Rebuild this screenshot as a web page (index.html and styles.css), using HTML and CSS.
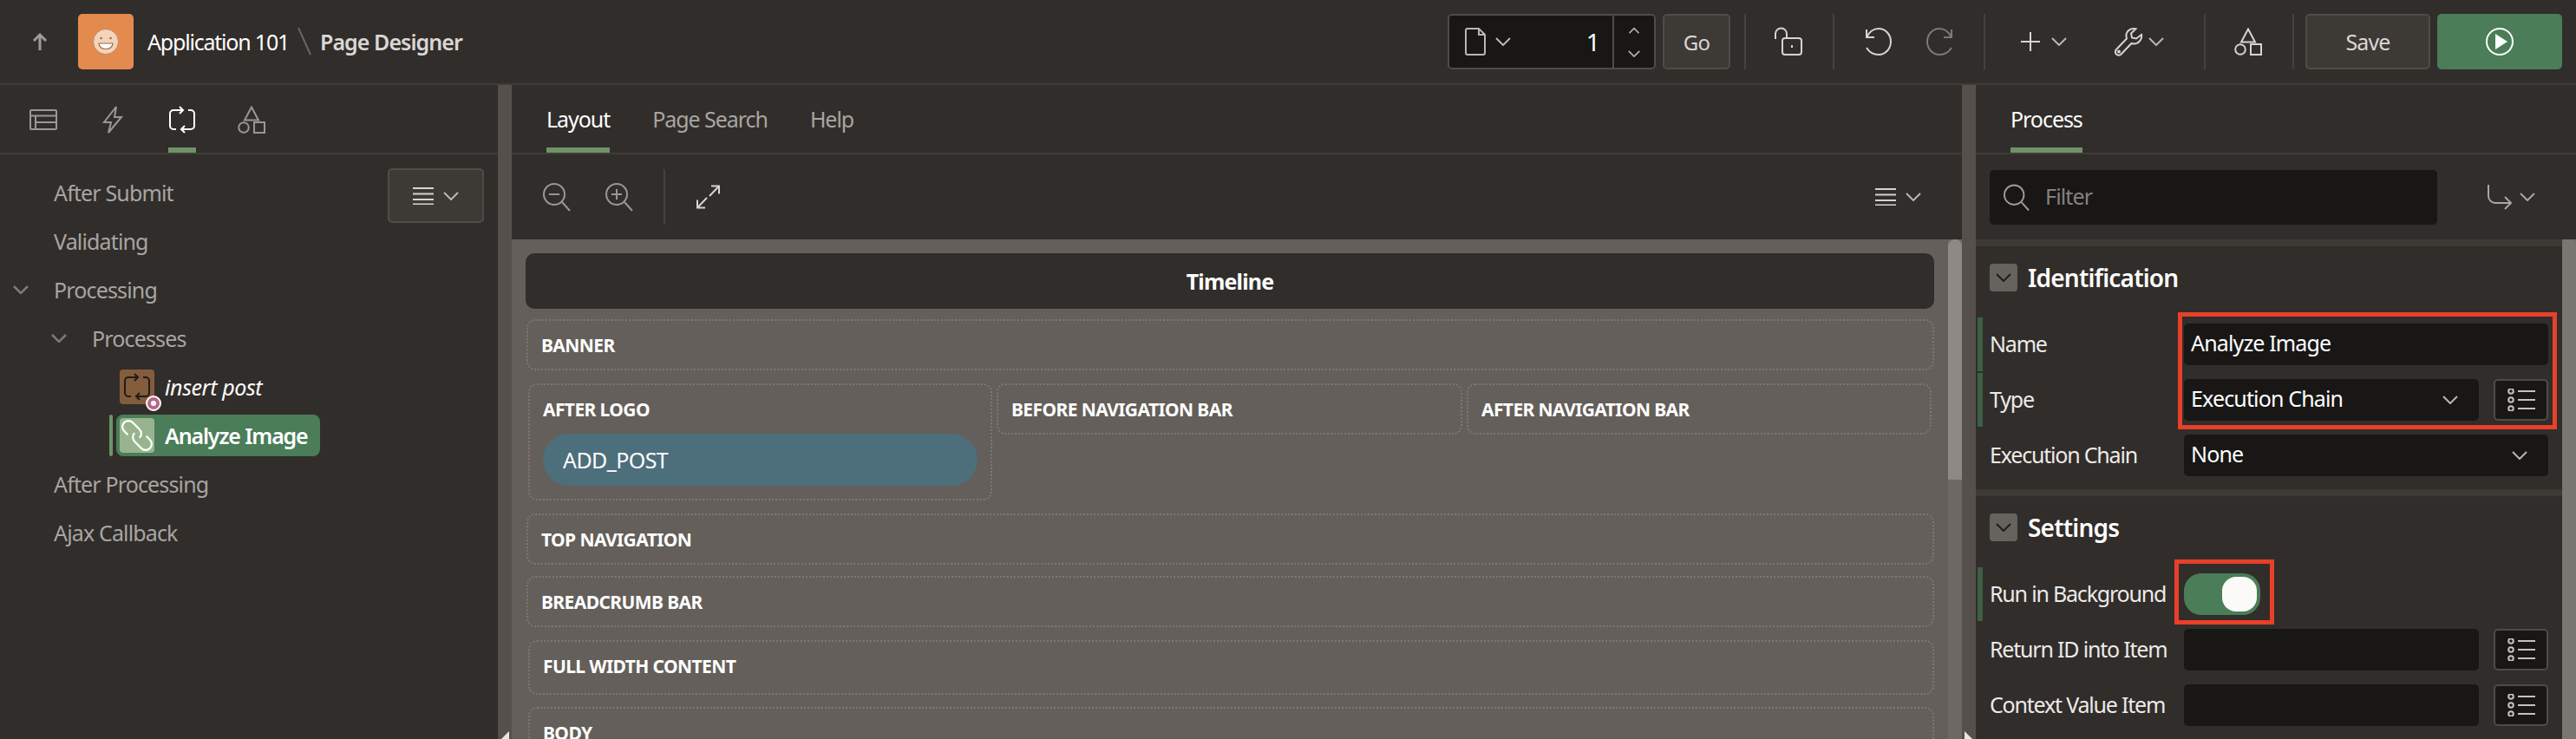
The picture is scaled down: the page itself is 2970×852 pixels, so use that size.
FILE: index.html
```html
<!DOCTYPE html>
<html lang="en">
<head>
<meta charset="utf-8">
<title>Page Designer</title>
<link rel="stylesheet" href="styles.css">
</head>
<body>
<svg class="sprite" xmlns="http://www.w3.org/2000/svg">
  <symbol id="i-chev" viewBox="0 0 18 10"><path d="M1 1l8 8 8-8"/></symbol>
  <symbol id="i-shapes" viewBox="0 0 32 32"><path d="M16 1.500L24 16.500H8Z"/><circle cx="7" cy="25" r="5.800"/><rect x="19" y="19" width="12" height="12"/></symbol>
  <symbol id="i-loop" viewBox="0 0 32 32"><path d="M17 5H6a4 4 0 0 0-4 4v14a4 4 0 0 0 4 4h3M15 27h11a4 4 0 0 0 4-4V9a4 4 0 0 0-4-4h-3M13 1l4 4-4 4M19 23l-4 4 4 4"/></symbol>
  <symbol id="i-menu" viewBox="0 0 24 20"><path d="M0 1h24M0 7.500h24M0 14h24M0 19.500h24"/></symbol>
  <symbol id="i-list" viewBox="0 0 32 26"><circle cx="4" cy="3" r="2.800"/><circle cx="4" cy="13" r="2.800"/><circle cx="4" cy="23" r="2.800"/><path d="M12 3h20M12 13h20M12 23h20"/></symbol>
</svg>

<header class="topbar">
  <svg class="ico ic-up" viewBox="0 0 18 20"><path d="M9 20V2M2 9l7-7 7 7"/></svg>
  <div class="app-logo">
    <svg class="logo-face" viewBox="0 0 30 30"><circle class="face" cx="15" cy="15" r="14.500"/><circle class="eye" cx="9.500" cy="11" r="1.300"/><circle class="eye" cx="20.500" cy="11" r="1.300"/><path class="mouth" d="M7 17h16c0 4-3.500 6.500-8 6.500S7 21 7 17Z"/></svg>
  </div>
  <span class="crumb-app">Application 101</span>
  <svg class="crumb-slash" viewBox="0 0 16 32"><path d="M1 0l14 31"/></svg>
  <span class="crumb-page">Page Designer</span>

  <div class="page-picker">
    <svg class="ico ic-page" viewBox="0 0 24 32"><path d="M1 3a2 2 0 0 1 2-2h13l7 7v21a2 2 0 0 1-2 2H3a2 2 0 0 1-2-2ZM16 1v7h7"/></svg>
    <svg class="ico ic-chev ic-chev-page"><use href="#i-chev"/></svg>
    <span class="page-num">1</span>
    <div class="spinner">
      <svg class="ico ic-spin" viewBox="0 0 18 10"><path d="M2 9l7-7 7 7"/></svg>
      <svg class="ico ic-spin"><use href="#i-chev"/></svg>
    </div>
  </div>
  <button class="btn btn-go">Go</button>
  <span class="sep sep-a"></span>
  <svg class="ico ic-tb ic-lock" viewBox="0 0 32 32"><path d="M1 13V7a6.500 6.500 0 0 1 13 0v5"/><rect x="9" y="12" width="22" height="19" rx="3"/><path d="M20 20v3"/></svg>
  <span class="sep sep-b"></span>
  <svg class="ico ic-tb ic-undo" viewBox="0 0 32 32"><path d="M2 2v9h9M2 11C5 5 10 1 16 1c8 0 14 7 14 15s-6 15-14 15c-6 0-11-3-14-8"/></svg>
  <svg class="ico ic-tb ic-redo" viewBox="0 0 32 32"><path d="M30 2v9h-9M30 11C27 5 22 1 16 1 8 1 2 8 2 16s6 15 14 15c6 0 11-3 14-8"/></svg>
  <span class="sep sep-c"></span>
  <svg class="ico ic-plus" viewBox="0 0 22 22"><path d="M11 0v22M0 11h22"/></svg>
  <svg class="ico ic-chev ic-chev-plus"><use href="#i-chev"/></svg>
  <svg class="ico ic-tb ic-wrench" viewBox="0 0 32 32"><path d="M31 8c1 5-3 10.500-8.500 10.500-1 0-2-.2-3-.5L7.500 30.500c-1.500 1.500-4 1.500-5.500 0s-1.500-4 0-5.500L14 12.500c-1-3-.5-6.500 1.500-8.800C18 1 21.500.5 24.500 1.300L19 6.500l1 5 5 1Z"/><circle cx="5" cy="27.500" r="1"/></svg>
  <svg class="ico ic-chev ic-chev-wrench"><use href="#i-chev"/></svg>
  <span class="sep sep-d"></span>
  <svg class="ico ic-tb ic-shapes-top"><use href="#i-shapes"/></svg>
  <span class="sep sep-e"></span>
  <button class="btn btn-save">Save</button>
  <button class="btn btn-run" aria-label="Run">
    <svg class="ic-run" viewBox="0 0 32 32"><circle cx="16" cy="16" r="15"/><path d="M11 7l14 9-14 9Z"/></svg>
  </button>
</header>

<main class="workspace">
  <section class="left-pane">
    <nav class="tabs icon-tabs">
      <span class="icon-tab"><svg class="ico ic-tab ic-tab-wide" viewBox="0 0 32 24"><rect x="1" y="1" width="30" height="22" rx="1"/><path d="M1 7.500h30M7 7.500V23M7 15h24"/></svg></span>
      <span class="icon-tab"><svg class="ico ic-tab" viewBox="0 0 24 32"><path d="M16 1L2 19h8L7 31l15-18h-8Z"/></svg></span>
      <span class="icon-tab active"><svg class="ico ic-tab"><use href="#i-loop"/></svg></span>
      <span class="icon-tab"><svg class="ico ic-tab"><use href="#i-shapes"/></svg></span>
    </nav>
    <div class="tree-wrap">
      <ul class="tree">
        <li class="tree-row lvl0"><span class="twist"></span>After Submit</li>
        <li class="tree-row lvl0"><span class="twist"></span>Validating</li>
        <li class="tree-row lvl0"><span class="twist"><svg class="ico ic-chev"><use href="#i-chev"/></svg></span>Processing</li>
        <li class="tree-row lvl1"><span class="twist"><svg class="ico ic-chev"><use href="#i-chev"/></svg></span>Processes</li>
        <li class="tree-row lvl2">
          <span class="node">
            <span class="node-icon node-icon-brown">
              <svg class="ic-node-loop"><use href="#i-loop"/></svg>
              <span class="badge"></span>
            </span>
            <em class="node-label node-label-italic">insert post</em>
          </span>
        </li>
        <li class="tree-row lvl2 selected">
          <span class="node">
            <span class="node-icon node-icon-green">
              <svg class="ic-link" viewBox="0 0 40 40"><g transform="rotate(45 20 20)"><path d="M24 20a7 7 0 0 0-7-7H6a7 7 0 0 0 0 14h6M16 20a7 7 0 0 0 7 7h11a7 7 0 0 0 0-14h-6"/></g></svg>
            </span>
            <span class="node-label">Analyze Image</span>
          </span>
        </li>
        <li class="tree-row lvl0"><span class="twist"></span>After Processing</li>
        <li class="tree-row lvl0"><span class="twist"></span>Ajax Callback</li>
      </ul>
      <button class="btn btn-treemenu" aria-label="Menu">
        <svg class="ico ic-menu"><use href="#i-menu"/></svg>
        <svg class="ico ic-chev"><use href="#i-chev"/></svg>
      </button>
    </div>
  </section>

  <div class="splitter"><span class="collapse collapse-left"></span></div>

  <section class="center-pane">
    <nav class="tabs text-tabs">
      <span class="text-tab active">Layout</span>
      <span class="text-tab">Page Search</span>
      <span class="text-tab">Help</span>
    </nav>
    <div class="layout-tools">
      <svg class="ico ic-zoom" viewBox="0 0 32 32"><circle cx="13" cy="13" r="12"/><path d="M22 22l9 10M7 13h12"/></svg>
      <svg class="ico ic-zoom ic-zoom-in" viewBox="0 0 32 32"><circle cx="13" cy="13" r="12"/><path d="M22 22l9 10M7 13h12M13 7v12"/></svg>
      <span class="sep sep-tools"></span>
      <svg class="ico ic-expand" viewBox="0 0 27 28"><path d="M15 13L26 1.500M17 1.500h9v9M12 15L1 26.500M1 17.500v9h9"/></svg>
      <svg class="ico ic-menu ic-menu-tools"><use href="#i-menu"/></svg>
      <svg class="ico ic-chev ic-chev-tools"><use href="#i-chev"/></svg>
    </div>
    <div class="canvas">
      <div class="canvas-content">
        <div class="timeline">Timeline</div>
        <div class="zone zone-banner">BANNER</div>
        <div class="zone-row">
          <div class="zone zone-tall">
            <div class="zone-label">AFTER LOGO</div>
            <div class="pill">ADD_POST</div>
          </div>
          <div class="zone">BEFORE NAVIGATION BAR</div>
          <div class="zone">AFTER NAVIGATION BAR</div>
        </div>
        <div class="zone zone-top">TOP NAVIGATION</div>
        <div class="zone zone-bread">BREADCRUMB BAR</div>
        <div class="zone zone-full">FULL WIDTH CONTENT</div>
        <div class="zone zone-body">BODY</div>
      </div>
      <div class="scroll-track"><span class="scroll-thumb"></span></div>
    </div>
  </section>

  <div class="splitter"><span class="collapse collapse-right"></span></div>

  <section class="right-pane">
    <nav class="tabs text-tabs process-tabs">
      <span class="text-tab active">Process</span>
    </nav>
    <div class="filter-row">
      <div class="filter">
        <svg class="ico ic-search" viewBox="0 0 32 32"><circle cx="13" cy="13" r="12"/><path d="M22 22l9 10"/></svg>
        <span class="filter-text">Filter</span>
      </div>
      <svg class="ico ic-goto" viewBox="0 0 28 30"><path d="M1 1v13a8 8 0 0 0 8 8h18M20 15l7 7-7 7"/></svg>
      <svg class="ico ic-chev ic-chev-goto"><use href="#i-chev"/></svg>
    </div>
    <div class="props">
      <div class="props-scroll">
        <section class="prop-group">
          <h2 class="group-head"><span class="group-toggle"><svg class="ico ic-chev"><use href="#i-chev"/></svg></span>Identification</h2>
          <div class="prop changed"><label>Name</label>
            <div class="field">Analyze Image</div>
          </div>
          <div class="prop changed"><label>Type</label>
            <div class="field-line">
              <div class="field field-select">Execution Chain<svg class="ico ic-chev"><use href="#i-chev"/></svg></div>
              <button class="btn-list" aria-label="List"><svg class="ico ic-list"><use href="#i-list"/></svg></button>
            </div>
          </div>
          <div class="prop"><label>Execution Chain</label>
            <div class="field field-select">None<svg class="ico ic-chev"><use href="#i-chev"/></svg></div>
          </div>
          <span class="callout callout-a"></span>
        </section>
        <section class="prop-group">
          <h2 class="group-head"><span class="group-toggle"><svg class="ico ic-chev"><use href="#i-chev"/></svg></span>Settings</h2>
          <div class="prop changed"><label>Run in Background</label>
            <span class="switch"><span class="knob"></span></span>
          </div>
          <div class="prop"><label>Return ID into Item</label>
            <div class="field-line">
              <div class="field field-select"></div>
              <button class="btn-list" aria-label="List"><svg class="ico ic-list"><use href="#i-list"/></svg></button>
            </div>
          </div>
          <div class="prop"><label>Context Value Item</label>
            <div class="field-line">
              <div class="field field-select"></div>
              <button class="btn-list" aria-label="List"><svg class="ico ic-list"><use href="#i-list"/></svg></button>
            </div>
          </div>
          <span class="callout callout-b"></span>
        </section>
      </div>
      <div class="scroll-track scroll-track-props"><span class="scroll-thumb scroll-thumb-props"></span></div>
    </div>
  </section>
</main>
</body>
</html>
```

FILE: styles.css
```css
* { box-sizing: border-box; }
html, body { margin: 0; padding: 0; }
body {
  width: 2970px; height: 852px; overflow: hidden;
  background: #312d2a; color: #fff;
  font-family: "Noto Sans", "Open Sans", sans-serif;
  font-size: 25px; letter-spacing: -0.85px;
}
button { font: inherit; letter-spacing: inherit; margin: 0; padding: 0; border: 0; color: inherit; }
ul { list-style: none; margin: 0; padding: 0; }
.sprite { display: none; }
.ico { display: block; flex: none; fill: none; stroke: #d6d4d2; stroke-width: 2; overflow: visible; }

/* top bar */
.topbar {
  display: flex; align-items: center;
  height: 98px; padding: 0 16px 0 37px;
  border-bottom: 2px solid #403c38;
}
.ic-up { width: 18px; height: 20px; stroke: #a09c98; stroke-width: 3; }
.app-logo {
  display: flex; align-items: center; justify-content: center;
  width: 64px; height: 64px; margin-left: 35px;
  background: #e38a4e; border-radius: 5px;
}
.logo-face { width: 30px; height: 30px; }
.face { fill: #f2d3bb; stroke: #c58759; stroke-width: 1; }
.eye { fill: #a8663c; }
.mouth { fill: #fff; stroke: #a8663c; stroke-width: 1.2; }
.crumb-app { width: 161px; margin-left: 16px; letter-spacing: -1.2px; white-space: nowrap; }
.crumb-slash { width: 16px; height: 32px; margin-left: 12px; fill: none; stroke: #6a6561; stroke-width: 2; }
.crumb-page { margin-left: 10px; font-weight: 600; color: #d9d7d5; letter-spacing: -0.95px; }

.page-picker {
  display: flex; align-items: center;
  width: 240px; height: 64px; margin-left: auto;
  background: #181716; border: 2px solid #4f4b47; border-radius: 5px;
}
.ic-page { width: 24px; height: 32px; margin-left: 18px; stroke: #b9b6b3; }
.ic-chev { width: 18px; height: 10px; stroke: #b9b6b3; }
.ic-chev-page { margin-left: 11px; }
.page-num { margin-left: auto; margin-right: 15px; font-size: 28px; }
.spinner {
  display: flex; flex-direction: column; align-items: center; justify-content: center; gap: 19px;
  width: 48px; height: 100%; border-left: 2px solid #4f4b47;
}
.ic-spin { width: 14px; height: 8px; stroke: #b9b6b3; }
.btn {
  display: flex; align-items: center; justify-content: center; flex: none;
  background: #3d3935; border: 2px solid #4f4b47; border-radius: 5px; color: #d9d7d5;
}
.btn-go { width: 78px; height: 64px; margin-left: 8px; font-size: 24px; }
.sep { display: block; flex: none; width: 2px; height: 64px; background: #45413d; }
.sep-a { margin-left: 16px; }
.ic-tb { width: 32px; height: 32px; }
.ic-lock { margin-left: 33px; }
.sep-b { margin-left: 35px; }
.ic-undo { margin-left: 35px; }
.ic-redo { margin-left: 38px; stroke: #7d7975; }
.sep-c { margin-left: 35px; }
.ic-plus { width: 22px; height: 22px; margin-left: 41px; }
.ic-chev-plus { margin-left: 13px; }
.ic-wrench { margin-left: 55px; }
.ic-chev-wrench { margin-left: 7px; }
.sep-d { margin-left: 46px; }
.ic-shapes-top { margin-left: 33px; }
.sep-e { margin-left: 35px; }
.btn-save { width: 144px; height: 64px; margin-left: 13px; }
.btn-run { width: 144px; height: 64px; margin-left: 8px; background: #4a7d58; border: 0; }
.ic-run { display: block; width: 32px; height: 32px; }
.ic-run circle { fill: none; stroke: #fff; stroke-width: 2; }
.ic-run path { fill: #fff; }

/* panes */
.workspace {
  display: grid; grid-template-columns: 574px 16px 1672px 16px 692px;
  height: 754px;
}
.left-pane, .center-pane, .right-pane { display: flex; flex-direction: column; min-width: 0; overflow: hidden; }
.splitter { position: relative; background: #55504b; }
.collapse { position: absolute; bottom: 0; width: 0; height: 0; border-style: solid; }
.collapse-left { left: 4px; border-width: 9px 9px 0 0; border-color: transparent #e8e6e3 transparent transparent; }
.collapse-right { left: 3px; border-width: 9px 0 0 9px; border-color: transparent transparent transparent #e8e6e3; }

.tabs { display: flex; flex: none; height: 80px; border-bottom: 2px solid #403c38; }
.icon-tabs { gap: 48px; padding-left: 34px; }
.icon-tab {
  display: flex; align-items: center; justify-content: center;
  width: 32px; padding-top: 8px; border-bottom: 6px solid transparent;
}
.icon-tab.active { border-bottom-color: #6f9268; }
.ic-tab { width: 32px; height: 32px; stroke: #9b9794; }
.ic-tab-wide { height: 24px; }
.icon-tab.active .ic-tab { stroke: #fff; }

.text-tabs { gap: 49px; padding-left: 40px; letter-spacing: -1.05px; }
.text-tab {
  display: flex; align-items: center;
  padding-top: 6px; border-bottom: 6px solid transparent; color: #a8a5a2;
}
.text-tab.active { color: #fff; border-bottom-color: #6f9268; }

/* tree */
.tree-wrap { display: flex; align-items: flex-start; padding: 16px 16px 0 0; }
.tree { flex: 1; }
.tree-row { display: flex; align-items: center; height: 56px; color: #a8a5a2; }
.lvl0 { padding-left: 15px; }
.lvl1 { padding-left: 59px; }
.lvl2 { padding-left: 126px; }
.twist { display: block; width: 47px; flex: none; }
.twist .ic-chev { stroke: #7d7975; stroke-width: 2.5; }
.node { display: flex; align-items: center; height: 48px; margin-left: 8px; padding: 0 16px 0 4px; border-radius: 8px; color: #fff; }
.selected .node { position: relative; background: #4a7d58; font-weight: 600; width: 235px; letter-spacing: -1.15px; }
.selected .node::before {
  content: ""; position: absolute; left: -8px; top: 0; bottom: 0; width: 4px; background: #6f9268; border-radius: 2px;
}
.node-icon { position: relative; display: flex; align-items: center; justify-content: center; flex: none; width: 40px; height: 40px; border-radius: 4px; }
.node-icon-brown { background: #835d3c; }
.node-icon-green { background: #98b48e; }
.node-label { margin-left: 12px; white-space: nowrap; }
.node-label-italic { letter-spacing: -0.4px; }
.ic-node-loop { width: 32px; height: 32px; fill: none; stroke: #201c19; stroke-width: 2; }
.ic-link { width: 40px; height: 40px; fill: none; stroke: #fff; stroke-width: 2.2; }
.badge {
  position: absolute; right: -8px; bottom: -8px;
  width: 18px; height: 18px; border-radius: 50%;
  background: #fff; border: 3px solid #fff;
}
.badge::after {
  content: ""; position: absolute; inset: -1px; border-radius: 50%;
  border: 4px solid #b5688a;
}
.btn-treemenu { gap: 11px; width: 111px; height: 63px; }
.ic-menu { width: 24px; height: 20px; }

/* layout editor */
.layout-tools { display: flex; flex: none; align-items: center; height: 98px; padding-left: 36px; }
.ic-zoom { width: 32px; height: 32px; stroke: #9b9794; }
.ic-zoom-in { margin-left: 40px; }
.sep-tools { margin-left: 35px; }
.ic-expand { width: 27px; height: 28px; margin-left: 36px; }
.ic-menu-tools { margin-left: auto; }
.ic-chev-tools { margin-left: 11px; margin-right: 47px; }
.canvas { display: flex; flex: 1; min-height: 0; background: #645f5a; }
.canvas-content { flex: 1; min-width: 0; padding: 16px 16px 0; }
.timeline {
  display: flex; align-items: center; justify-content: center;
  height: 64px; margin-bottom: 12px;
  background: #312d2a; border-radius: 10px; font-weight: 700;
}
.zone {
  display: flex; align-items: center;
  height: 59px; margin-left: 1px; padding-left: 15px;
  border: 2px dotted #7d7873; border-radius: 10px;
  font-size: 21px; font-weight: 700; letter-spacing: -0.6px;
}
.zone-row { display: grid; grid-template-columns: 535px 537px 536px; gap: 5px; align-items: start; margin: 15px 0 15px 3px; }
.zone-row .zone { margin-left: 0; }
.zone-row .zone-tall { display: block; height: 135px; padding-right: 15px; }
.zone-label { display: flex; align-items: center; height: 56px; }
.pill {
  display: flex; align-items: center;
  height: 60px; padding-left: 23px;
  background: #4d6f7c; border-radius: 30px;
  font-size: 25px; font-weight: 400; letter-spacing: -0.6px;
}
.zone-top { margin-bottom: 13px; }
.zone-bread { margin-bottom: 15px; }
.zone-full { height: 63px; margin-left: 3px; margin-bottom: 14px; padding-bottom: 3px; }
.zone-body { margin-left: 3px; }
.scroll-track { flex: none; width: 16px; background: #6d6864; }
.scroll-thumb { display: block; height: 277px; background: #8d8985; border-radius: 8px 8px 0 0; }

/* property editor */
.process-tabs { padding-left: 40px; }
.filter-row { display: flex; flex: none; align-items: center; height: 98px; padding-left: 16px; }
.filter { display: flex; align-items: center; width: 516px; height: 63px; padding-left: 16px; background: #181716; border-radius: 5px; }
.ic-search { width: 30px; height: 31px; stroke: #a09c98; }
.filter-text { margin-left: 18px; padding-bottom: 3px; color: #85817d; }
.ic-goto { width: 28px; height: 30px; margin-left: 58px; stroke: #a9a6a3; }
.ic-chev-goto { margin-left: 9px; stroke: #a9a6a3; }
.props { display: flex; flex: 1; min-height: 0; }
.props-scroll { flex: 1; min-width: 0; }
.prop-group { position: relative; padding: 20px 16px 8px 2px; border-top: 8px solid #3d3935; }
.group-head {
  display: flex; align-items: center; gap: 12px;
  height: 32px; margin: 0 0 30px 14px;
  font-size: 28px; font-weight: 600; letter-spacing: -0.8px;
}
.group-toggle { display: flex; align-items: center; justify-content: center; width: 32px; height: 32px; background: #66625d; border-radius: 4px; }
.group-toggle .ic-chev { stroke: #201c19; }
.prop {
  display: grid; grid-template-columns: 232px 420px; align-items: center;
  height: 62px; margin-bottom: 2px;
  border-left: 6px solid transparent;
}
.prop:last-of-type { margin-bottom: 0; }
.prop.changed { border-left-color: #3d5f45; }
.prop label { padding: 0 0 3px 8px; white-space: nowrap; color: #eceae8; letter-spacing: -1.2px; }
.field { height: 48px; padding-left: 8px; line-height: 45px; background: #181716; border-radius: 5px; white-space: nowrap; }
.field-select { display: flex; align-items: center; justify-content: space-between; padding: 0 24px 3px 8px; }
.field-select .ic-chev { margin-top: 3px; }
.field-line { display: flex; gap: 17px; }
.field-line .field { width: 340px; }
.btn-list { display: flex; align-items: center; justify-content: center; flex: none; width: 63px; height: 48px; background: #181716; border: 2px solid #4f4b47; border-radius: 5px; }
.ic-list { width: 32px; height: 26px; stroke: #c4c2bf; }
.switch { display: block; position: relative; width: 88px; height: 48px; background: #4a7d58; border-radius: 20px; }
.knob { position: absolute; right: 4px; top: 4px; width: 40px; height: 40px; background: #fbfaf8; border-radius: 16px; }
.callout { position: absolute; border: 5px solid #e8402a; pointer-events: none; }
.callout-a { left: 233px; top: 76px; width: 437px; height: 135px; }
.callout-b { left: 229px; top: 73px; width: 115px; height: 75px; }
.scroll-track-props { background: #76726e; }
.scroll-thumb-props { height: 100%; background: #7a7672; }
```
